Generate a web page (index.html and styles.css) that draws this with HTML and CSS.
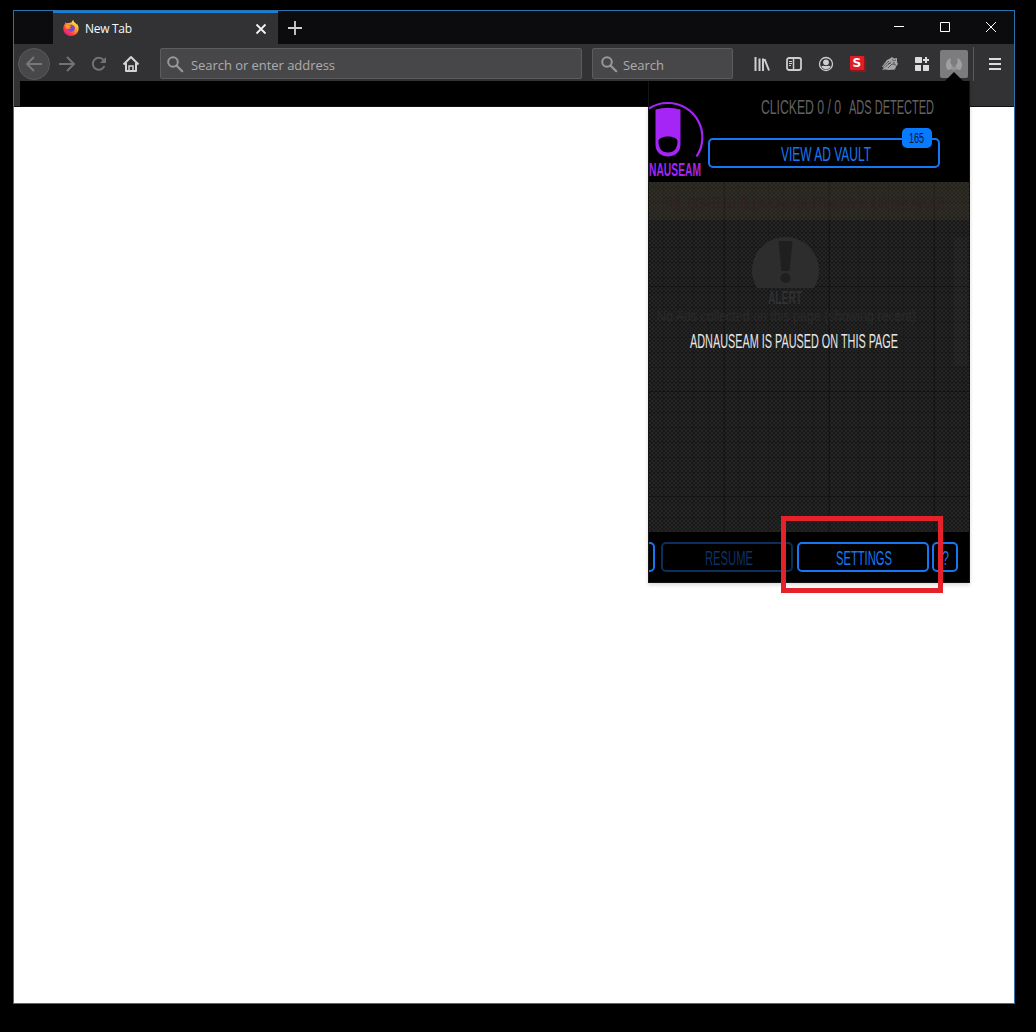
FILE: index.html
```html
<!DOCTYPE html>
<html lang="en">
<head>
<meta charset="utf-8">
<title>New Tab</title>
<link rel="stylesheet" href="styles.css">
</head>
<body>
<div class="window">
  <header class="tabbar">
    <div class="tab">
      <svg class="firefox" width="16" height="16" viewBox="0 0 16 16">
        <defs>
          <linearGradient id="flame" x1=".85" y1=".1" x2=".2" y2=".95"><stop offset="0" stop-color="#fff14b"/><stop offset=".4" stop-color="#ff9b23"/><stop offset=".75" stop-color="#fc3a4b"/><stop offset="1" stop-color="#e3198c"/></linearGradient>
        </defs>
        <path fill="url(#flame)" d="M2.4 2.2c.4.2.8.7 1.1 1.1.8-.4 1.7-.5 2.4-.3.9-.5 1.7-.7 2.6-.6C8.700 1.400 9.500.6 10.300 0c.2 1.700 1.200 2.300 2.300 3.300.4.400.7.800 1 1.300l.5-.5c1.100 1.700 1.700 3.200 1.500 5.200C15.200 13.200 12 16 8.100 16 3.900 16 .4 12.900.3 8.700.2 6.900.9 4.800 2.100 3.800c0-.6.1-1.100.3-1.600z"/>
        <path fill="#7846d8" d="M5.300 5.500c1.700-1.200 4.600-.9 5.900.8 1.500 2 .6 5.300-2.900 5.400-2.200 0-3.600-1.300-3.900-2.800 1.200.8 3 .5 3.500-.7-1.300.1-2.500-.2-2.800-1.100z"/>
        <path fill="#ff9a28" d="M2.500 5.200c1.300-.8 2.300-.6 3 .1.800.2 1.800.2 2.700.7-.3.900-1.400 1.100-1.600 1.800-.8.900-2.600 1.200-3.600.4z"/>
      </svg>
      <span class="tab-title">New Tab</span>
      <svg width="12" height="12" viewBox="0 0 12 12"><path d="M1.500 1.500l9 9M10.500 1.500l-9 9" stroke="#f4f4f5" stroke-width="1.800"/></svg>
    </div>
    <svg class="newtab" width="14" height="14" viewBox="0 0 14 14"><path d="M7 0v14M0 7h14" stroke="#d0d0d2" stroke-width="1.800"/></svg>
    <div class="controls">
      <svg width="10" height="10" viewBox="0 0 10 10"><path d="M0 4.500h10" stroke="#fff"/></svg>
      <svg width="10" height="10" viewBox="0 0 10 10"><path d="M.5.5h9v9h-9z" fill="none" stroke="#fff"/></svg>
      <svg width="10" height="10" viewBox="0 0 10 10"><path d="M0 0l10 10M10 0L0 10" stroke="#fff"/></svg>
    </div>
  </header>

  <nav class="toolbar">
    <div class="navicons">
      <span class="back"><svg width="18" height="16" viewBox="0 0 18 16"><path d="M17 8H2M9 1L2 8l7 7" fill="none" stroke="#77777a" stroke-width="2"/></svg></span>
      <svg width="18" height="16" viewBox="0 0 18 16"><path d="M1 8h15M9 1l7 7-7 7" fill="none" stroke="#727275" stroke-width="2"/></svg>
      <svg width="16" height="16" viewBox="0 0 16 16"><path d="M13.400 10A6 6 0 1 1 12.500 4" fill="none" stroke="#727275" stroke-width="2"/><path d="M15 1v6H9z" fill="#727275"/></svg>
      <svg width="16" height="16" viewBox="0 0 16 16"><path d="M.5 8.500L8 1l7.500 7.500M3 7v8h10V7" fill="none" stroke="#d4d4d6" stroke-width="2" stroke-linejoin="round"/><path d="M6 14v-4h4v4" fill="none" stroke="#d4d4d6" stroke-width="1.500"/></svg>
    </div>
    <div class="field address">
      <svg width="16" height="16" viewBox="0 0 16 16"><circle cx="6" cy="6" r="4.800" fill="none" stroke="#98989b" stroke-width="2"/><path d="M9.500 9.500l5.700 5.700" stroke="#98989b" stroke-width="2.200" stroke-linecap="round"/></svg>
      <span>Search or enter address</span>
    </div>
    <div class="field search">
      <svg width="16" height="16" viewBox="0 0 16 16"><circle cx="6" cy="6" r="4.800" fill="none" stroke="#98989b" stroke-width="2"/><path d="M9.500 9.500l5.700 5.700" stroke="#98989b" stroke-width="2.200" stroke-linecap="round"/></svg>
      <span>Search</span>
    </div>
    <div class="tools">
      <svg width="16" height="16" viewBox="0 0 16 16"><path d="M1.500 1v14M5.500 2.500V15M9 2.500V15M10.500 3L15 14.500" stroke="#cdcdd0" stroke-width="2"/></svg>
      <svg width="16" height="16" viewBox="0 0 16 16"><rect x="1" y="2" width="14" height="12" rx="2" fill="none" stroke="#cdcdd0" stroke-width="1.800"/><path d="M7.500 2v12" stroke="#cdcdd0" stroke-width="1.500"/><path d="M3 5.500h3M3 7.500h3M3 9.500h2" stroke="#cdcdd0"/></svg>
      <svg width="16" height="16" viewBox="0 0 16 16"><circle cx="8" cy="8" r="6.500" fill="none" stroke="#cdcdd0" stroke-width="1.300"/><circle cx="8" cy="6.300" r="2.900" fill="#cdcdd0"/><path d="M3.300 10.500c1.500-1 2-.9 2.800-.5h3.800c.8-.4 1.300-.5 2.800.5-1 2-2.700 2.700-4.700 2.700s-3.700-.7-4.700-2.700z" fill="#cdcdd0"/></svg>
      <svg width="16" height="16" viewBox="0 0 16 16"><path d="M0 0h14l2 2v14H2l-2-2z" fill="#96131a"/><path d="M0 0h14v14H0z" fill="#e01c25"/><text class="s-letter" x="2.500" y="11">S</text></svg>
      <svg width="16" height="16" viewBox="0 0 16 16"><path d="M0 10.500L5 4l3-1.500L10 1l2 1.500L15 2v4l1 2-2 2.500-1 3-6 .5-4-.5L0 14l2-2z" fill="#a7a7aa"/><path d="M1 10.500l6-5.500M3 11.500l6-6M6 12l4-4 4 1M10 3l1.500 2L14 4M6 8l3-1" fill="none" stroke="#48484a" stroke-width=".8"/><circle cx="12" cy="7" r=".7" fill="#29292b"/></svg>
      <svg width="16" height="16" viewBox="0 0 16 16"><path d="M1.800 1h5.400q.8 0 .8.800V7H1.800Q1 7 1 6.200V1.800Q1 1 1.800 1zM1 9h6v6H1.800Q1 15 1 14.200zM9 9h6v5.200q0 .8-.8.800H9.800Q9 15 9 14.200z" fill="#dcdcde"/><path d="M12 1v6M9 4h6" stroke="#dcdcde" stroke-width="2"/></svg>
    </div>
    <span class="active-ext"><svg width="16" height="16" viewBox="0 0 16 16"><path d="M4.500 2C1.500 3.500 0 6 0 9c0 2.500 1 4 2 5l4-1V9L4.500 7zM11.500 2C14.500 3.500 16 6 16 9c0 2.500-1 4-2 5l-4-1V9l1.500-2z" fill="#a0a0a2"/><path d="M5.500 8h5v4a2.500 2.500 0 0 1-5 0z" fill="#929294"/><circle cx="8" cy="9" r="1.800" fill="#7c7c7e"/></svg></span>
    <span class="divider"></span>
    <svg class="menu" width="12" height="12" viewBox="0 0 12 12"><path d="M0 1h12M0 6h12M0 11h12" stroke="#dcdcde" stroke-width="2"/></svg>
  </nav>
  <div class="bookmarks"><div class="redacted"></div></div>
  <main class="page"></main>

  <section class="popup">
    <svg class="pointer" width="20" height="10" viewBox="0 0 20 10"><path d="M0 10L10 0l10 10z"/></svg>
    <header class="popup-head">
      <svg class="logo" width="56" height="101" viewBox="0 0 56 101">
        <path d="M0 27.500A34 34 0 0 1 19 22A34.300 34.300 0 0 1 47.500 75.500" fill="none" stroke="#a425f5" stroke-width="2.200"/>
        <path fill-rule="evenodd" d="M6.500 28.500q12-3.500 25 0v35c0 8-6 12-12.500 12s-12.500-4-12.500-12zM9.500 60c0 7 3 11.500 9.500 11.500S28.500 67 28.500 60c-1-6-18-6-19 0z" fill="#a425f5"/>
        <text class="label purple" x="0" y="95" textLength="52" lengthAdjust="spacingAndGlyphs">NAUSEAM</text>
      </svg>
      <div class="stats">
        <svg class="clicked" width="180" height="22"><text class="label gray" x="2" y="18" textLength="80" lengthAdjust="spacingAndGlyphs">CLICKED 0 / 0</text><text class="label gray" x="90" y="18" textLength="85" lengthAdjust="spacingAndGlyphs">ADS DETECTED</text></svg>
        <div class="button vault">
          <svg width="94" height="24"><text class="label blue" x="2" y="20" textLength="90" lengthAdjust="spacingAndGlyphs">VIEW AD VAULT</text></svg>
          <span class="badge"><svg width="18" height="18"><text class="count" x="1" y="14" textLength="15" lengthAdjust="spacingAndGlyphs">165</text></svg></span>
        </div>
      </div>
    </header>
    <div class="popup-body">
      <div class="notice"><svg width="320" height="38"><text class="faint-red" x="15" y="27" textLength="281" lengthAdjust="spacingAndGlyphs">THE CONTENT BLOCKING SETTING IN YOUR BROWSER</text></svg></div>
      <svg class="alert" width="320" height="150" viewBox="0 0 320 150">
        <path d="M108 68A33.500 33.500 0 1 1 165 68z" fill="#2d2d2e"/>
        <path d="M129.500 21h14l-3 30h-8z" fill="#1f1f20"/><circle cx="136.500" cy="58" r="5" fill="#1f1f20"/>
        <text class="label alert-text" x="119" y="84" textLength="34" lengthAdjust="spacingAndGlyphs">ALERT</text>
        <text class="recent" x="8" y="101" textLength="259" lengthAdjust="spacingAndGlyphs">No Ads collected on this page (showing recent)</text>
        <text class="label white" x="41" y="128" textLength="208" lengthAdjust="spacingAndGlyphs">ADNAUSEAM IS PAUSED ON THIS PAGE</text>
        <path d="M305 18h13v128h-13z" fill="#fff" opacity=".02"/>
      </svg>
    </div>
    <footer class="popup-foot">
      <span class="button sliver"></span>
      <span class="button resume"><svg width="52" height="24"><text class="label dim" x="2" y="20" textLength="48" lengthAdjust="spacingAndGlyphs">RESUME</text></svg></span>
      <span class="button settings"><svg width="60" height="24"><text class="label blue" x="2" y="20" textLength="56" lengthAdjust="spacingAndGlyphs">SETTINGS</text></svg></span>
      <span class="button help"><svg width="10" height="24"><text class="label blue" x="2" y="20" textLength="7" lengthAdjust="spacingAndGlyphs">?</text></svg></span>
    </footer>
  </section>
  <div class="highlight"></div>
</div>
</body>
</html>
```
FILE: styles.css
```css
* { box-sizing: border-box; }
body { margin: 0; height: 1032px; padding: 10px 0 0 13px; background: #000; overflow: hidden; font-family: "Open Sans", "Noto Sans", sans-serif; }
svg { display: block; flex: none; overflow: visible; }
.window { position: relative; display: flex; flex-direction: column; width: 1002px; height: 994px; border: 1px solid #2b73ad; background: #323234; }
.tabbar { display: flex; align-items: center; height: 33px; padding-left: 39px; background: #0c0c0e; }
.tab { display: flex; align-items: center; width: 225px; height: 33px; padding: 0 11px 2px 10px; border-top: 2px solid #147fdc; background: #323234; color: #f9f9fa; font-size: 12px; }
.tab-title { flex: 1; margin-left: 6px; padding-top: 1px; letter-spacing: -.3px; }
.tab > svg:last-child { margin-top: 2px; }
.newtab { margin-left: 10px; }
.controls { display: flex; align-items: center; gap: 36px; height: 10px; margin-top: -1px; margin-left: auto; margin-right: 18px; }
.toolbar { display: flex; align-items: center; height: 37px; padding: 2px 13px 0 4px; }
.navicons { display: flex; align-items: center; gap: 16px; width: 142px; padding-top: 1px; }
.back { display: flex; align-items: center; justify-content: center; width: 32px; height: 32px; margin-right: -8px; border: 1px solid #59595b; border-radius: 50%; background: #48484a; }
.navicons > svg:nth-child(3) { margin-left: -1px; }
.field { display: flex; align-items: center; height: 31px; padding-left: 6px; gap: 8px; border: 1px solid #5c5c5e; border-radius: 2px; background: #474749; color: #adadaf; font-size: 13px; letter-spacing: -.05px; }
.field span { padding-top: 2px; }
.address { width: 422px; margin-right: 10px; }
.search { width: 141px; padding-left: 8px; gap: 6px; }
.tools { display: flex; align-items: center; gap: 16px; margin-left: 21px; }
.active-ext { display: flex; align-items: center; justify-content: center; width: 28px; height: 28px; margin-left: 10px; border-radius: 2px; background: #7c7c7e; }
.divider { width: 1px; height: 34px; margin-left: 5px; background: #5a5a5c; }
.menu { margin-left: 15px; }
.s-letter { font: 900 12px "DejaVu Sans", sans-serif; fill: #fff; }
.bookmarks { height: 26px; padding-left: 6px; border-bottom: 1px solid #111113; }
.redacted { width: 950px; height: 25px; background: #000; }
.page { flex: 1; background: #fff; }
.popup { position: absolute; left: 634px; top: 70px; display: flex; flex-direction: column; width: 322px; height: 502px; border: 1px solid #141415; border-top: 0; background: #000; box-shadow: 0 2px 4px rgba(0,0,0,.15); }
.pointer { position: absolute; right: 5px; top: -9px; fill: #000; }
.popup-head { display: flex; height: 101px; }
.stats { display: flex; flex-direction: column; width: 264px; margin-left: 3px; padding-top: 15px; }
.clicked { margin-left: 51px; }
.label { font: 20px "Liberation Sans Narrow", "Liberation Sans", sans-serif; }
.blue { fill: #1677f2; }
.gray { fill: #626261; }
.dim { fill: #0b3265; }
.white { fill: #e5e5e4; }
.purple { fill: #a425f5; font-size: 18px; font-weight: bold; }
.button { display: flex; align-items: center; justify-content: center; height: 30px; border: 2px solid #1677f2; border-radius: 5px; }
.vault { position: relative; width: 232px; margin: 20px 0 0; padding-left: 3px; }
.badge { position: absolute; right: 6px; top: -12px; display: flex; align-items: center; justify-content: center; width: 30px; height: 20px; border-radius: 5px; background: #087aff; }
.count { font: 14px "Liberation Sans Narrow", "Liberation Sans", sans-serif; fill: #001838; }
.popup-body { height: 350px; background: repeating-linear-gradient(90deg, transparent 0 14px, rgba(0,0,0,.13) 14px 15px), repeating-linear-gradient(0deg, transparent 0 14px, rgba(0,0,0,.13) 14px 15px), linear-gradient(90deg, transparent 104px, rgba(0,0,0,.3) 104px) -29px 0 / 105px 105px, linear-gradient(transparent 104px, rgba(0,0,0,.3) 104px) 0 0 / 105px 105px, repeating-conic-gradient(#191919 0 25%, #252526 0 50%) 0 0 / 4px 4px; }
.notice { height: 38px; background: rgba(90,80,45,.2); }
.faint-red { font: 17px "Liberation Sans Narrow", "Liberation Sans", sans-serif; fill: #30211e; }
.alert-text { fill: #303031; font-weight: bold; font-size: 18px; }
.recent { font: 14px "Liberation Sans", sans-serif; fill: #29292a; }
.popup-foot { display: flex; align-items: center; height: 50px; overflow: hidden; }
.sliver { width: 20px; margin-left: -14px; flex: none; }
.resume { width: 132px; margin-left: 6px; padding-left: 3px; border-color: #0b2e5a; }
.settings { width: 132px; margin-left: 4px; padding-left: 2px; }
.help { width: 26px; margin-left: 3px; }
.highlight { position: absolute; left: 767px; top: 505px; width: 162px; height: 77px; border: 5px solid #e52129; }
```
